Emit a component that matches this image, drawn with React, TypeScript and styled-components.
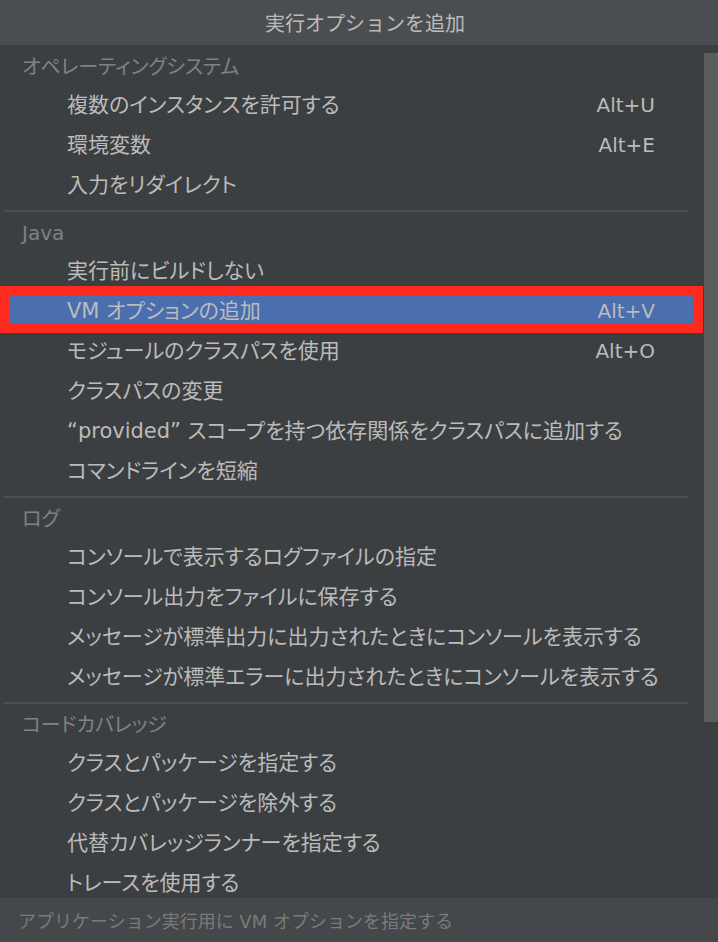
import React from "react";
import styled, { createGlobalStyle } from "styled-components";

const Global = createGlobalStyle`
  html, body { margin: 0; padding: 0; background: #3c3f41; }
  * { box-sizing: border-box; }
`;

const FONT = `"DejaVu Sans", "Noto Sans CJK JP", sans-serif`;

const Popup = styled.div`
  width: 718px;
  height: 942px;
  display: flex;
  flex-direction: column;
  background: #3c3f41;
  font-family: ${FONT};
  overflow: hidden;
`;

const Title = styled.div`
  height: 45px;
  flex: none;
  background: #4b4e51;
  color: #bbbbbb;
  font-size: 20px;
  display: flex;
  align-items: center;
  justify-content: center;
  padding-left: 12px;
  padding-bottom: 1px;
`;

const Body = styled.div`
  flex: 1;
  min-height: 0;
  display: flex;
`;

const List = styled.div`
  flex: 1;
  min-width: 0;
  padding-top: 1px;
  overflow: hidden;
`;

const Track = styled.div`
  width: 14px;
  flex: none;
  padding-top: 8px;
`;

const Thumb = styled.div`
  height: 669px;
  background: #5b5c5e;
`;

const Separator = styled.div`
  height: 2px;
  background: #4d5052;
  margin: 6px 16px 0 4px;
`;

const SectionTitle = styled.div`
  height: 38px;
  padding: 7px 0 0 22px;
  font-size: 20px;
  line-height: 28px;
  font-feature-settings: "palt";
  color: #808284;
`;

const Row = styled.div<{ $selected?: boolean }>`
  position: relative;
  height: 40px;
  margin-right: 1px;
  padding: 2px 48px 0 67px;
  display: flex;
  align-items: center;
  justify-content: space-between;
  font-size: 21px;
  font-feature-settings: "palt";
  color: #bbbbbb;
  background: ${(p) => (p.$selected ? "#4b6eaf" : "transparent")};
  white-space: nowrap;
`;

const Label = styled.span`
  line-height: 1;
`;

const Shortcut = styled.span`
  font-size: 20px;
  color: #bbbbbb;
`;

const Annotation = styled.span`
  position: absolute;
  left: 0;
  right: 0;
  top: -4px;
  bottom: -3px;
  border: 10px solid #fe2a1f;
  border-left-width: 9px;
  pointer-events: none;
`;

const Footer = styled.div`
  height: 44px;
  flex: none;
  background: #45484a;
  color: #7a7a7a;
  font-size: 18px;
  display: flex;
  align-items: center;
  padding-left: 18px;
`;

type Item = { label: string; shortcut?: string; selected?: boolean };
type Section = { title: string; items: Item[] };

const sections: Section[] = [
  {
    title: "オペレーティングシステム",
    items: [
      { label: "複数のインスタンスを許可する", shortcut: "Alt+U" },
      { label: "環境変数", shortcut: "Alt+E" },
      { label: "入力をリダイレクト" },
    ],
  },
  {
    title: "Java",
    items: [
      { label: "実行前にビルドしない" },
      { label: "VM オプションの追加", shortcut: "Alt+V", selected: true },
      { label: "モジュールのクラスパスを使用", shortcut: "Alt+O" },
      { label: "クラスパスの変更" },
      { label: "“provided” スコープを持つ依存関係をクラスパスに追加する" },
      { label: "コマンドラインを短縮" },
    ],
  },
  {
    title: "ログ",
    items: [
      { label: "コンソールで表示するログファイルの指定" },
      { label: "コンソール出力をファイルに保存する" },
      { label: "メッセージが標準出力に出力されたときにコンソールを表示する" },
      { label: "メッセージが標準エラーに出力されたときにコンソールを表示する" },
    ],
  },
  {
    title: "コードカバレッジ",
    items: [
      { label: "クラスとパッケージを指定する" },
      { label: "クラスとパッケージを除外する" },
      { label: "代替カバレッジランナーを指定する" },
      { label: "トレースを使用する" },
    ],
  },
];

export default function App() {
  return (
    <>
      <Global />
      <Popup>
        <Title>実行オプションを追加</Title>
        <Body>
          <List>
            {sections.map((s, i) => (
              <React.Fragment key={s.title}>
                {i > 0 && <Separator />}
                <SectionTitle>{s.title}</SectionTitle>
                {s.items.map((it) => (
                  <Row key={it.label} $selected={it.selected}>
                    <Label>{it.label}</Label>
                    {it.shortcut && <Shortcut>{it.shortcut}</Shortcut>}
                    {it.selected && <Annotation />}
                  </Row>
                ))}
              </React.Fragment>
            ))}
          </List>
          <Track>
            <Thumb />
          </Track>
        </Body>
        <Footer>アプリケーション実行用に VM オプションを指定する</Footer>
      </Popup>
    </>
  );
}
